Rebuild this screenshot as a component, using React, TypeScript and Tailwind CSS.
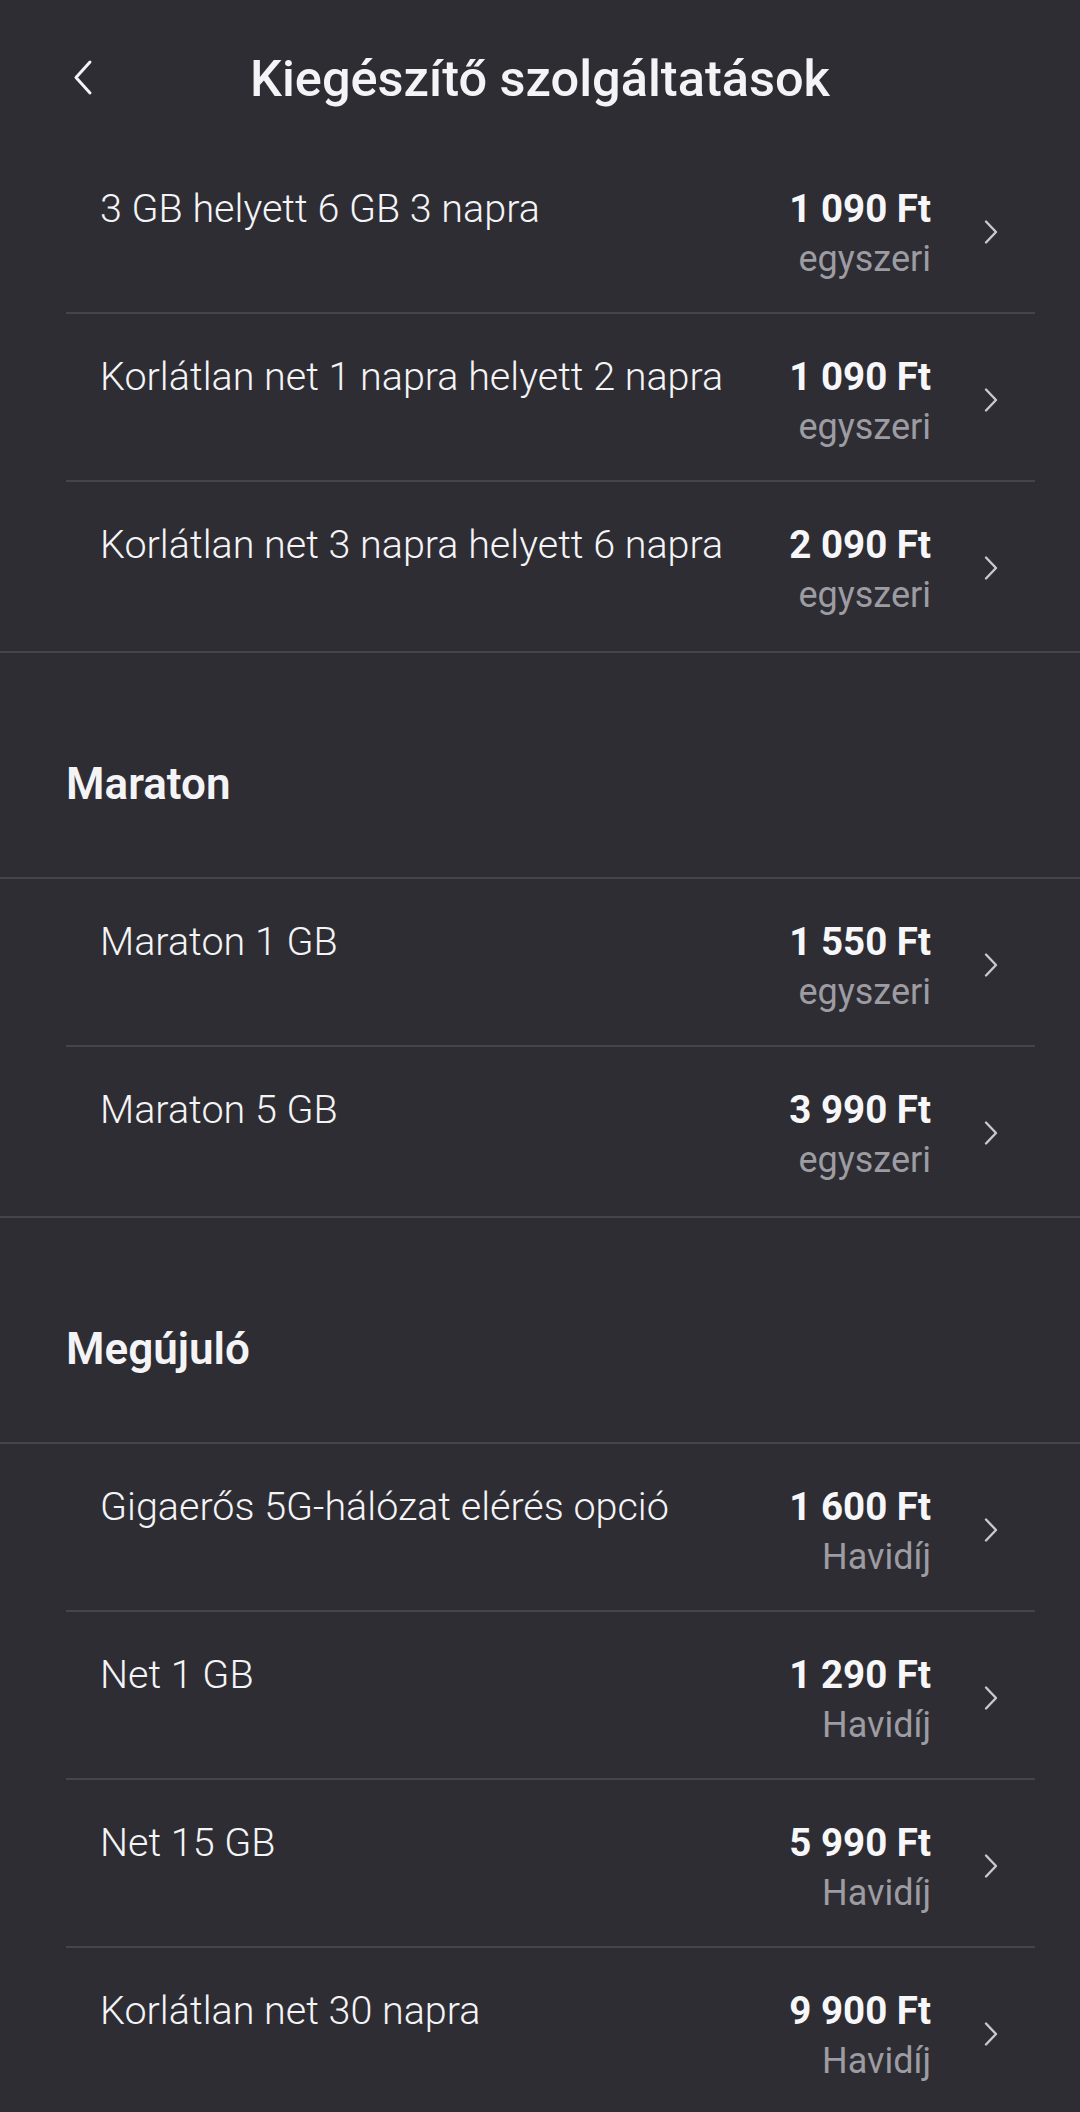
import React from 'react'

type Item = { name: string; price: string; note: string }
type Group = { title?: string; items: Item[] }

const groups: Group[] = [
  {
    items: [
      { name: '3 GB helyett 6 GB 3 napra', price: '1 090 Ft', note: 'egyszeri' },
      { name: 'Korlátlan net 1 napra helyett 2 napra', price: '1 090 Ft', note: 'egyszeri' },
      { name: 'Korlátlan net 3 napra helyett 6 napra', price: '2 090 Ft', note: 'egyszeri' },
    ],
  },
  {
    title: 'Maraton',
    items: [
      { name: 'Maraton 1 GB', price: '1 550 Ft', note: 'egyszeri' },
      { name: 'Maraton 5 GB', price: '3 990 Ft', note: 'egyszeri' },
    ],
  },
  {
    title: 'Megújuló',
    items: [
      { name: 'Gigaerős 5G-hálózat elérés opció', price: '1 600 Ft', note: 'Havidíj' },
      { name: 'Net 1 GB', price: '1 290 Ft', note: 'Havidíj' },
      { name: 'Net 15 GB', price: '5 990 Ft', note: 'Havidíj' },
      { name: 'Korlátlan net 30 napra', price: '9 900 Ft', note: 'Havidíj' },
    ],
  },
]

function ChevronRight() {
  return (
    <svg width="16" height="26" viewBox="0 0 16 26" fill="none" className="shrink-0">
      <path d="M3 2.5 L13 13 L3 23.5" stroke="#c9c8ce" strokeWidth="2.4" strokeLinecap="round" strokeLinejoin="round" />
    </svg>
  )
}

function Row({ item, last }: { item: Item; last: boolean }) {
  return (
    <div
      className={`ml-[66px] mr-[45px] flex items-center pt-[38px] ${
        last ? 'pb-[31px]' : 'pb-[28px] border-b-2 border-[#45444b]'
      }`}
    >
      <div className="flex-1 pl-[34px] self-start text-[39.5px] leading-[50px] font-light text-[#f4f4f6]">
        {item.name}
      </div>
      <div className="flex flex-col items-end mr-[52px]">
        <span className="text-[38.5px] leading-[50px] font-bold text-[#f7f7f9]">{item.price}</span>
        <span className="text-[36px] leading-[50px] text-[#9d9ca2]">{item.note}</span>
      </div>
      <div className="mr-[36px] mb-[5px]">
        <ChevronRight />
      </div>
    </div>
  )
}

export default function App() {
  return (
    <div
      className="w-[1080px] h-[2112px] overflow-hidden bg-[#2e2d34] text-white"
      style={{ fontFamily: 'Roboto, "Noto Sans", sans-serif' }}
    >
      <header className="relative h-[146px] flex items-center justify-center">
        <button className="absolute left-[70px] top-[59px]">
          <svg width="26" height="37" viewBox="0 0 26 37" fill="none">
            <path d="M20 3 L6 18.5 L20 34" stroke="#f4f4f6" strokeWidth="3" strokeLinecap="round" strokeLinejoin="round" />
          </svg>
        </button>
        <h1 className="mt-[12px] text-[50.5px] leading-[60px] font-medium text-[#f4f4f6]">
          Kiegészítő szolgáltatások
        </h1>
      </header>

      {groups.map((group, gi) => (
        <div key={gi}>
          {group.title && (
            <div className="px-[66px] pt-[103px] pb-[65px] border-b-2 border-[#45444b]">
              <h2 className="text-[44px] leading-[56px] font-semibold text-[#f4f4f6]">{group.title}</h2>
            </div>
          )}
          <div className="border-b-2 border-[#45444b]">
            {group.items.map((item, i) => (
              <Row key={item.name} item={item} last={i === group.items.length - 1} />
            ))}
          </div>
        </div>
      ))}
    </div>
  )
}
